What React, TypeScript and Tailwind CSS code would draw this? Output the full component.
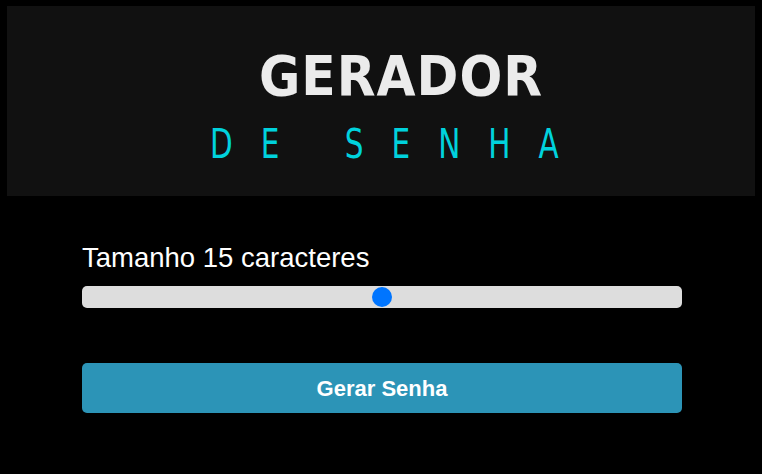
import { useState } from 'react';

export default function App() {
  const [size, setSize] = useState(15);
  const min = 6;
  const max = 24;
  const pct = ((size - min) / (max - min)) * 100;

  return (
    <div className="min-h-[474px] w-full bg-black font-['Liberation_Sans',Arial,sans-serif] text-white">
      {/* Logo banner */}
      <div className="px-[7px] pt-[6px]">
        <div className="flex h-[190px] flex-col items-center justify-center bg-[#111111] pt-[11px]">
          <div className="ml-[40px] font-['DejaVu_Sans_Condensed','DejaVu_Sans',sans-serif] text-[56px] font-bold leading-none tracking-[1px] text-[#ebebeb]">
            GERADOR
          </div>
          <div className="mt-[20px] ml-[34px] font-['DejaVu_Sans_Condensed','DejaVu_Sans',sans-serif] text-[41px] leading-none tracking-[35px] text-[#00d2dd] [transform:scaleX(0.8)]">
            DE SENHA
          </div>
        </div>
      </div>

      {/* Controls */}
      <div className="w-[600px] ml-[82px] pt-[46px]">
        <label className="block text-[27.5px] leading-[32px]">Tamanho {size} caracteres</label>

        <div className="relative mt-[12px] h-[22px] rounded-[5px] bg-[#dddddd]">
          <input
            type="range"
            min={min}
            max={max}
            value={size}
            onChange={(e) => setSize(Number(e.target.value))}
            className="absolute inset-0 h-full w-full cursor-pointer opacity-0"
          />
          <div
            className="pointer-events-none absolute top-[1px] h-[20px] w-[20px] rounded-full bg-[#0075ff]"
            style={{ left: `calc(${pct}% - 10px)` }}
          />
        </div>

        <button className="mt-[55px] flex h-[50px] w-full items-center justify-center rounded-[5px] bg-[#2c94b7] text-[22px] font-bold text-white">
          Gerar Senha
        </button>
      </div>
    </div>
  );
}
